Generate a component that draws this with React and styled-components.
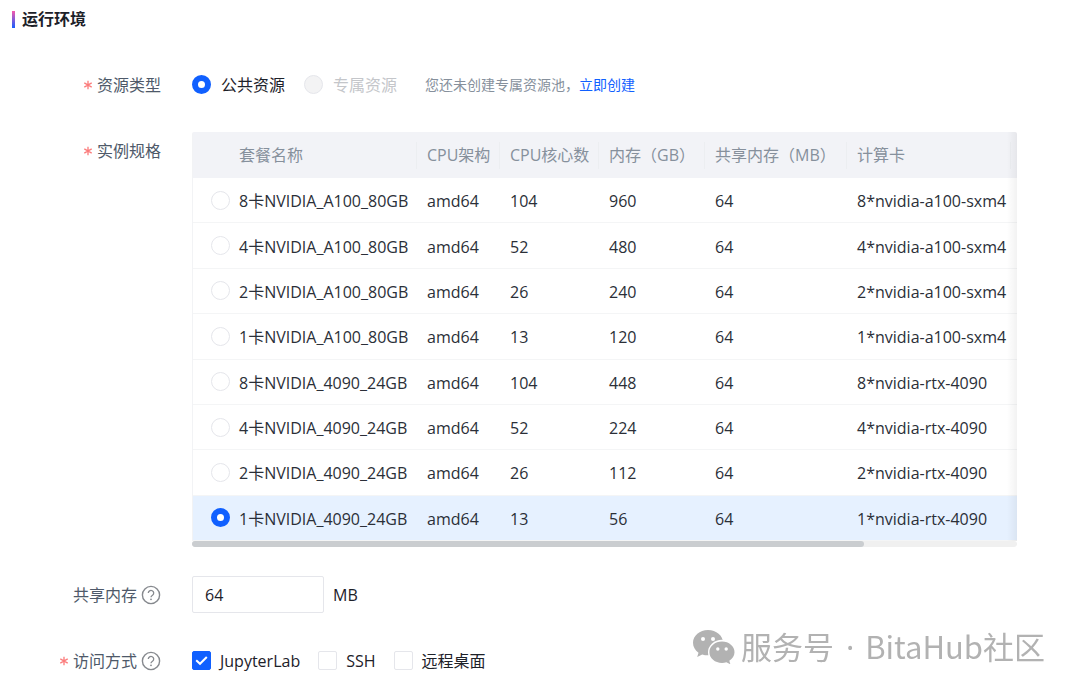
import React, { useState } from 'react';
import styled, { createGlobalStyle } from 'styled-components';

const GlobalStyle = createGlobalStyle`
  * {
    box-sizing: border-box;
  }

  body {
    margin: 0;
    background: #ffffff;
    color: #1d2129;
    font-family: 'Open Sans', 'Noto Sans CJK SC', sans-serif;
    font-size: 16px;
    line-height: 24px;
  }
`;

const Page = styled.main`
  padding: 7px 63px 16px 12px;
`;

const SectionTitle = styled.h2`
  display: flex;
  align-items: center;
  gap: 7px;
  margin: 0 0 35px;
  font-size: 16px;
  line-height: 24px;
  font-weight: 700;

  &::before {
    content: '';
    width: 3px;
    height: 17px;
    background: linear-gradient(180deg, #f759ab 0%, #165dff 100%);
  }
`;

const FormItem = styled.div`
  display: grid;
  grid-template-columns: 149px minmax(0, 1fr);
  column-gap: 31px;
  align-items: start;
  margin-bottom: ${({ $gap }) => $gap || 29}px;
`;

const ItemLabel = styled.div`
  display: flex;
  align-items: center;
  justify-content: flex-end;
  gap: 4px;
  min-height: 37px;
  color: #4e5969;
  white-space: nowrap;
`;

const ItemContent = styled.div`
  display: flex;
  align-items: center;
  min-height: 37px;
`;

const Choice = styled.label`
  display: flex;
  align-items: center;
  gap: ${({ $compact }) => ($compact ? 9 : 10)}px;
  margin-right: ${({ $compact }) => ($compact ? 18 : 19)}px;
  color: ${({ $disabled }) => ($disabled ? '#c4c6ca' : '#1d2129')};
  white-space: nowrap;
`;

const Radio = styled.input.attrs({ type: 'radio' })`
  appearance: none;
  flex: none;
  width: 19px;
  height: 19px;
  margin: 0;
  border: 1px solid #e5e6eb;
  border-radius: 50%;
  background: #ffffff;

  &:checked {
    border: 6px solid #1060ff;
  }

  &:disabled {
    background: #f3f3f4;
  }
`;

const CheckBoxWrap = styled.span`
  display: grid;
  width: 19px;
  height: 19px;

  > * {
    grid-area: 1 / 1;
  }

  svg {
    place-self: center;
    pointer-events: none;
  }
`;

const CheckInput = styled.input.attrs({ type: 'checkbox' })`
  appearance: none;
  width: 19px;
  height: 19px;
  margin: 0;
  border: 1px solid #e5e6eb;
  border-radius: 2px;
  background: #ffffff;

  &:checked {
    border-color: #1060ff;
    background: #1060ff;
  }
`;

const Tip = styled.p`
  margin: 0 0 0 9px;
  font-size: 14px;
  color: #86909c;
`;

const TipLink = styled.a`
  color: #1060ff;
  text-decoration: none;
`;

const TableBox = styled.div`
  position: relative;
  overflow: hidden;
  border-radius: 2px;

  &::after {
    content: '';
    position: absolute;
    top: 0;
    right: 0;
    bottom: 6px;
    width: 10px;
    background: linear-gradient(90deg, rgba(0, 0, 0, 0) 0%, rgba(0, 0, 0, 0.05) 100%);
    pointer-events: none;
  }
`;

const SpecTable = styled.table`
  width: 100%;
  height: 409px;
  table-layout: fixed;
  border-collapse: separate;
  border-spacing: 0;
  border-left: 1px solid #f2f3f5;
`;

const Col = styled.col`
  width: ${({ $width }) => $width}px;
`;

const HeadCell = styled.th`
  height: 46px;
  padding: 0;
  background: #f2f3f7;
  color: #86909c;
  font-weight: 400;
  text-align: left;
  white-space: nowrap;
`;

const HeadText = styled.div`
  height: 27px;
  padding: 1px 10px 0;
  line-height: 24px;
  border-right: 1px solid ${({ $divided }) => ($divided ? '#eceef1' : 'transparent')};
`;

const Row = styled.tr`
  background: ${({ $active }) => ($active ? '#e6f1ff' : '#ffffff')};
`;

const Cell = styled.td`
  padding: 2px 0 0 10px;
  border-bottom: 1px solid #f4f5f6;
  color: #2b2f38;
  line-height: 24px;
  white-space: nowrap;
`;

const RadioCell = styled(Cell)`
  padding: 0 0 0 18px;

  ${Radio} {
    display: block;
  }
`;

const ScrollTrack = styled.div`
  height: 6px;
  border-radius: 3px;
  background: #f0f0f0;
`;

const ScrollThumb = styled.div`
  width: ${({ $ratio }) => $ratio}%;
  height: 6px;
  border-radius: 3px;
  background: #cacdd0;
`;

const MemoryInput = styled.input`
  width: 132px;
  height: 37px;
  margin-right: 9px;
  padding: 0 12px;
  border: 1px solid #e5e6eb;
  border-radius: 2px;
  color: #1d2129;
  font: inherit;
`;

const Watermark = styled.div`
  position: fixed;
  right: 35px;
  bottom: 24px;
  display: flex;
  align-items: center;
  gap: 6px;
  color: #b2b2b2;
  font-family: 'Noto Sans CJK SC', sans-serif;
  font-size: 31px;
  line-height: 42px;
  white-space: nowrap;
  pointer-events: none;
`;

const Dot = styled.span`
  margin: 0 4px 0 12px;
  font-family: 'Noto Sans', sans-serif;
`;

const columns = [
  { title: '', width: 36 },
  { title: '套餐名称', width: 188, divided: true },
  { title: 'CPU架构', width: 83, divided: true },
  { title: 'CPU核心数', width: 99, divided: true },
  { title: '内存（GB）', width: 106, divided: true },
  { title: '共享内存（MB）', width: 142, divided: true },
  { title: '计算卡', width: 164, divided: true },
];

const specs = [
  ['8卡NVIDIA_A100_80GB', 'amd64', 104, 960, 64, '8*nvidia-a100-sxm4'],
  ['4卡NVIDIA_A100_80GB', 'amd64', 52, 480, 64, '4*nvidia-a100-sxm4'],
  ['2卡NVIDIA_A100_80GB', 'amd64', 26, 240, 64, '2*nvidia-a100-sxm4'],
  ['1卡NVIDIA_A100_80GB', 'amd64', 13, 120, 64, '1*nvidia-a100-sxm4'],
  ['8卡NVIDIA_4090_24GB', 'amd64', 104, 448, 64, '8*nvidia-rtx-4090'],
  ['4卡NVIDIA_4090_24GB', 'amd64', 52, 224, 64, '4*nvidia-rtx-4090'],
  ['2卡NVIDIA_4090_24GB', 'amd64', 26, 112, 64, '2*nvidia-rtx-4090'],
  ['1卡NVIDIA_4090_24GB', 'amd64', 13, 56, 64, '1*nvidia-rtx-4090'],
];

const RequiredMark = () => (
  <svg width="10" height="10" viewBox="0 0 10 10" aria-hidden="true">
    <path
      d="M5 .8v8.400M1.300 2.900l7.400 4.200M8.700 2.900L1.300 7.100"
      stroke="#fb7c7c"
      strokeWidth="1.300"
      fill="none"
    />
  </svg>
);

const HelpIcon = () => (
  <svg width="20" height="20" viewBox="0 0 20 20" fill="none" stroke="#86898e" aria-hidden="true">
    <circle cx="10" cy="10" r="8.6" strokeWidth="1.4" />
    <path d="M7.3 8.100a2.700 2.600 0 1 1 4.200 2.100c-.9.6-1.500 1-1.500 2" strokeWidth="1.300" />
    <circle cx="10" cy="14.3" r=".9" fill="#86898e" stroke="none" />
  </svg>
);

const WechatIcon = () => (
  <svg width="42" height="34" viewBox="0 0 42 34" aria-hidden="true">
    <path
      fill="#b2b2b2"
      d="M15 0C6.700 0 0 5.700 0 12.800c0 4 2.100 7.500 5.500 9.900L4.200 27l5-2.600c1.800.5 3.700.9 5.800.9C23.300 25.300 30 19.800 30 12.700S23.300 0 15 0z"
    />
    <ellipse cx="29" cy="22.300" rx="14" ry="12.500" fill="#fff" />
    <path
      fill="#b2b2b2"
      d="M29 11.500c-7 0-12.600 4.800-12.600 10.800S22 33 29 33c1.500 0 3-.3 4.400-.7l4 2-1.100-3.500c3.200-2 5.200-5 5.200-8.500 0-6-5.500-10.800-12.500-10.800z"
    />
    <g fill="#fff">
      <circle cx="10" cy="9" r="2" />
      <circle cx="20" cy="9" r="2" />
      <circle cx="24.800" cy="19" r="1.700" />
      <circle cx="33.200" cy="19" r="1.700" />
    </g>
  </svg>
);

const CheckOption = ({ label, checked, onChange }) => (
  <Choice $compact>
    <CheckBoxWrap>
      <CheckInput checked={checked} onChange={onChange} />
      {checked && (
        <svg width="13" height="11" viewBox="0 0 13 11" fill="none" stroke="#fff" strokeWidth="2">
          <path d="M1.200 5.200l3.800 3.600L11.800 2" />
        </svg>
      )}
    </CheckBoxWrap>
    {label}
  </Choice>
);

const App = () => {
  const [selected, setSelected] = useState(7);
  const [memory, setMemory] = useState('64');
  const [access, setAccess] = useState(['JupyterLab']);

  const toggleAccess = (name) => {
    setAccess(access.includes(name) ? access.filter((item) => item !== name) : [...access, name]);
  };

  return (
    <>
      <GlobalStyle />
      <Page>
        <SectionTitle>运行环境</SectionTitle>

        <FormItem>
          <ItemLabel id="resource-label">
            <RequiredMark />
            资源类型
          </ItemLabel>
          <ItemContent role="radiogroup" aria-labelledby="resource-label">
            <Choice>
              <Radio name="resource" defaultChecked />
              公共资源
            </Choice>
            <Choice $disabled>
              <Radio name="resource" disabled />
              专属资源
            </Choice>
            <Tip>
              您还未创建专属资源池，<TipLink href="#create">立即创建</TipLink>
            </Tip>
          </ItemContent>
        </FormItem>

        <FormItem>
          <ItemLabel id="spec-label">
            <RequiredMark />
            实例规格
          </ItemLabel>
          <TableBox>
            <SpecTable aria-labelledby="spec-label">
              <colgroup>
                {columns.map((column) => (
                  <Col key={column.title} $width={column.width} />
                ))}
                <col />
              </colgroup>
              <thead>
                <tr>
                  {columns.map((column) => (
                    <HeadCell key={column.title}>
                      <HeadText $divided={column.divided}>{column.title}</HeadText>
                    </HeadCell>
                  ))}
                  <HeadCell />
                </tr>
              </thead>
              <tbody>
                {specs.map((spec, index) => (
                  <Row key={spec[0]} $active={index === selected}>
                    <RadioCell>
                      <Radio
                        name="spec"
                        aria-label={spec[0]}
                        checked={index === selected}
                        onChange={() => setSelected(index)}
                      />
                    </RadioCell>
                    {spec.map((value, i) => (
                      <Cell key={columns[i + 1].title}>{value}</Cell>
                    ))}
                    <Cell />
                  </Row>
                ))}
              </tbody>
            </SpecTable>
            <ScrollTrack>
              <ScrollThumb $ratio={81.5} />
            </ScrollTrack>
          </TableBox>
        </FormItem>

        <FormItem>
          <ItemLabel as="label" htmlFor="memory">
            共享内存
            <HelpIcon />
          </ItemLabel>
          <ItemContent>
            <MemoryInput id="memory" value={memory} onChange={(e) => setMemory(e.target.value)} />
            MB
          </ItemContent>
        </FormItem>

        <FormItem $gap={8}>
          <ItemLabel id="access-label">
            <RequiredMark />
            访问方式
            <HelpIcon />
          </ItemLabel>
          <ItemContent role="group" aria-labelledby="access-label">
            {['JupyterLab', 'SSH', '远程桌面'].map((name) => (
              <CheckOption
                key={name}
                label={name}
                checked={access.includes(name)}
                onChange={() => toggleAccess(name)}
              />
            ))}
          </ItemContent>
        </FormItem>
      </Page>

      <Watermark>
        <WechatIcon />
        <span>
          服务号<Dot>·</Dot> BitaHub社区
        </span>
      </Watermark>
    </>
  );
};

export default App;
